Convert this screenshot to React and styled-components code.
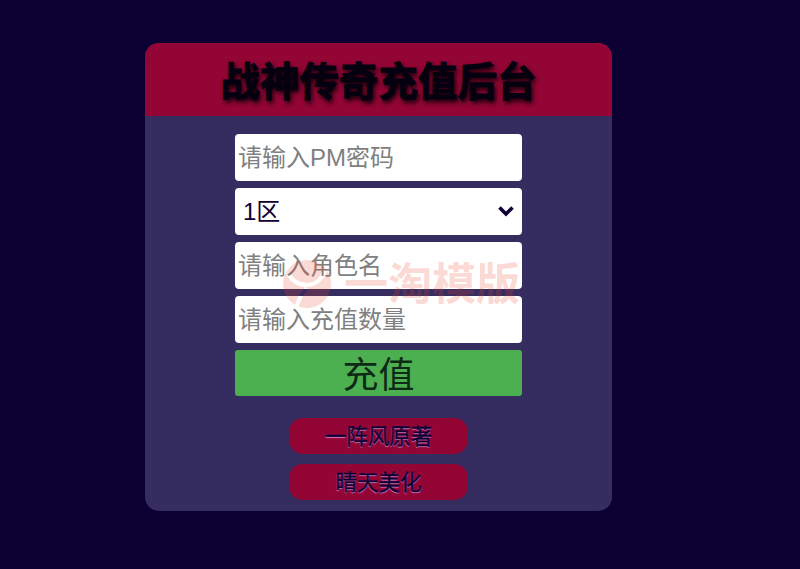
import styled, { createGlobalStyle } from "styled-components";

const GlobalStyle = createGlobalStyle`
  html, body {
    margin: 0;
    padding: 0;
    height: 100%;
    background: #0c0033;
  }
  body {
    font-family: "Liberation Sans", "Noto Sans CJK SC", sans-serif;
  }
`;

const Page = styled.div`
  position: relative;
  width: 800px;
  height: 569px;
  overflow: hidden;
  padding: 43px 0 0 145px;
  box-sizing: border-box;
`;

const Card = styled.div`
  width: 467px;
  height: 468px;
  background: #352c5f;
  border-radius: 14px;
  overflow: hidden;
`;

const Header = styled.div`
  height: 73px;
  background: #920535;
  display: flex;
  align-items: center;
  justify-content: center;
`;

const Title = styled.h1`
  margin: 6px 0 0;
  font-size: 39.5px;
  line-height: 1;
  font-weight: 700;
  color: #050010;
  -webkit-text-stroke: 1px #050010;
  text-shadow: 2px 3px 5px #000;
`;

const Form = styled.form`
  width: 287px;
  margin: 18px auto 0;
  display: flex;
  flex-direction: column;
  gap: 7px;
`;

const Input = styled.input`
  box-sizing: border-box;
  width: 100%;
  height: 47px;
  border: none;
  border-radius: 4px;
  background: #fff;
  padding: 0 3px;
  font-family: inherit;
  font-size: 24px;
  outline: none;
  &::placeholder {
    color: #808080;
    opacity: 1;
  }
`;

const SelectWrap = styled.div`
  position: relative;
  height: 47px;
`;

const Select = styled.select`
  box-sizing: border-box;
  width: 100%;
  height: 47px;
  border: none;
  border-radius: 4px;
  background: #fff;
  color: #0f0033;
  padding: 0 8px;
  font-family: inherit;
  font-size: 24px;
  appearance: none;
  outline: none;
`;

const Chevron = styled.svg`
  position: absolute;
  right: 7px;
  top: 17px;
  width: 18px;
  height: 12px;
  pointer-events: none;
`;

const SubmitButton = styled.button`
  height: 46px;
  border: none;
  border-radius: 3px;
  background: #4caf50;
  color: #0d2a16;
  font-family: inherit;
  font-size: 36px;
  line-height: 1;
  padding: 5px 0 0;
`;

const Links = styled.div`
  margin-top: 22px;
  display: flex;
  flex-direction: column;
  align-items: center;
  gap: 10px;
`;

const PillLink = styled.a`
  width: 179px;
  height: 36px;
  box-sizing: border-box;
  border-radius: 14px;
  padding-bottom: 4px;
  background: #920535;
  color: #0e0035;
  font-size: 21.5px;
  -webkit-text-stroke: 0.4px #0e0035;
  text-shadow: 0 1px 1px #e08ed0;
  display: flex;
  align-items: center;
  justify-content: center;
  text-decoration: none;
`;

const Watermark = styled.div`
  position: absolute;
  left: 282px;
  top: 260px;
  display: flex;
  align-items: center;
  gap: 12px;
  opacity: 0.2;
  pointer-events: none;
  color: #f0482c;
  font-size: 44px;
  font-weight: 700;
  line-height: 1;
`;

const WatermarkLogo = styled.svg`
  width: 50px;
  height: 50px;
`;

export default function App() {
  return (
    <Page>
      <GlobalStyle />
      <Card>
        <Header>
          <Title>战神传奇充值后台</Title>
        </Header>
        <Form>
          <Input placeholder="请输入PM密码" />
          <SelectWrap>
            <Select defaultValue="1">
              <option value="1">1区</option>
              <option value="2">2区</option>
            </Select>
            <Chevron viewBox="0 0 18 12">
              <path d="M2.5 2.5 L9 9 L15.5 2.5" fill="none" stroke="#0f0033" strokeWidth="3.6" />
            </Chevron>
          </SelectWrap>
          <Input placeholder="请输入角色名" />
          <Input placeholder="请输入充值数量" />
          <SubmitButton type="button">充值</SubmitButton>
        </Form>
        <Links>
          <PillLink href="#">一阵风原著</PillLink>
          <PillLink href="#">晴天美化</PillLink>
        </Links>
      </Card>
      <Watermark>
        <WatermarkLogo viewBox="0 0 50 50">
          <mask id="logo-cut">
            <rect width="50" height="50" fill="#fff" />
            <path d="M6 13 Q12 25 25 25 Q37 25 43 11" fill="none" stroke="#000" strokeWidth="4" />
            <path d="M25 28 Q17 36 14 49" fill="none" stroke="#000" strokeWidth="4" />
          </mask>
          <circle cx="25" cy="24" r="24" fill="#f0482c" mask="url(#logo-cut)" />
        </WatermarkLogo>
        <span>一淘模版</span>
      </Watermark>
    </Page>
  );
}
